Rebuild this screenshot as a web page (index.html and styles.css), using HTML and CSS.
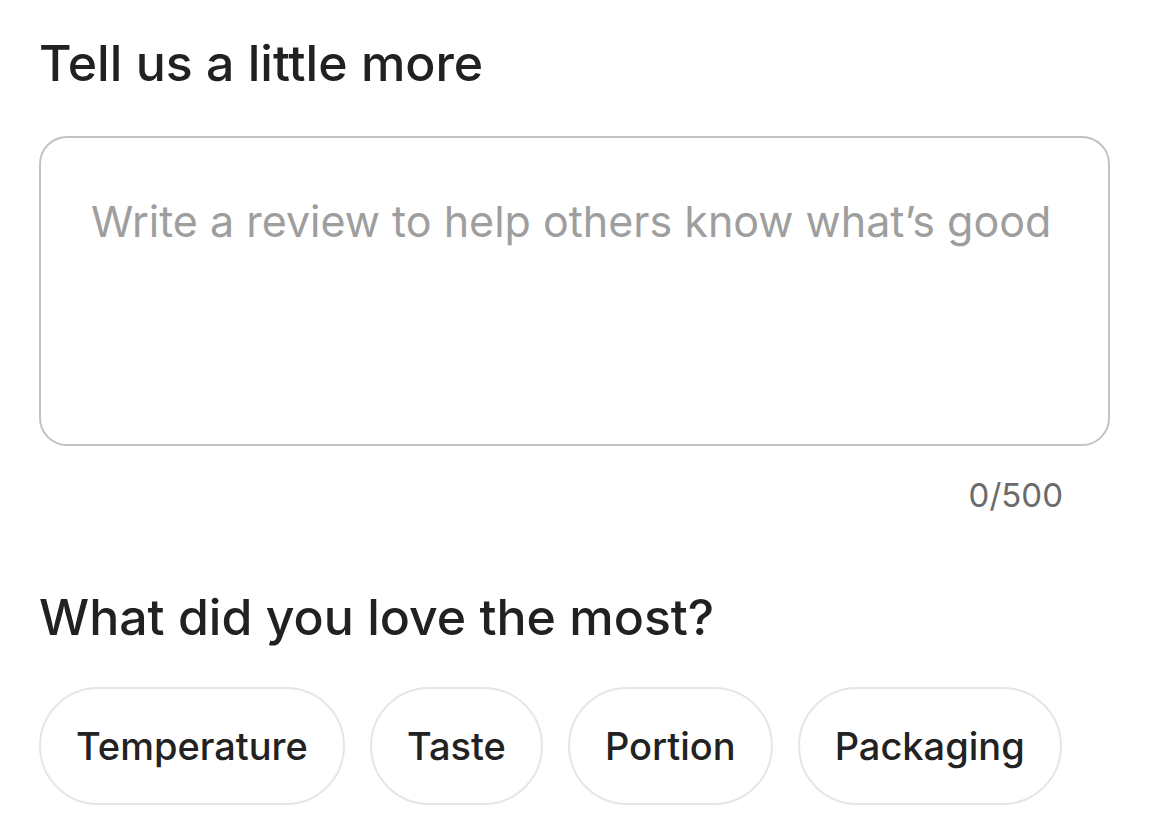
FILE: index.html
```html
<!DOCTYPE html>
<html>
<head>
<meta charset="utf-8">
<link rel="stylesheet" href="styles.css">
</head>
<body>
<main class="page">
  <h1 class="title">Tell us a little more</h1>
  <div class="review-box">
    <div class="placeholder">Write a review to help others know what’s good</div>
  </div>
  <div class="counter">0/500</div>
  <h2 class="title title-2">What did you love the most?</h2>
  <div class="chips">
    <button class="chip">Temperature</button>
    <button class="chip">Taste</button>
    <button class="chip">Portion</button>
    <button class="chip">Packaging</button>
  </div>
</main>
</body>
</html>
```

FILE: styles.css
```css
html, body {
  margin: 0;
  padding: 0;
  background: #ffffff;
}
.page {
  font-family: Inter, Roboto, "Liberation Sans", sans-serif;
  padding: 30px 40px 0 39px;
  width: 1071px;
}
.title {
  margin: 0;
  font-size: 50px;
  line-height: 66px;
  font-weight: 500;
  color: #212121;
  letter-spacing: 0;
}
.review-box {
  margin-top: 40px;
  height: 310px;
  border: 2px solid #c2c2c2;
  border-radius: 28px;
  padding: 53px 50px 0 50px;
  box-sizing: border-box;
}
.placeholder {
  font-size: 43px;
  line-height: 60px;
  color: #9e9e9e;
}
.counter {
  text-align: right;
  padding-right: 47px;
  margin-top: 29px;
  font-size: 33px;
  line-height: 40px;
  color: #6b6b6b;
}
.title-2 {
  margin-top: 69px;
}
.chips {
  display: flex;
  gap: 25px;
  margin-top: 37px;
}
.chip {
  font-family: inherit;
  font-size: 38px;
  font-weight: 500;
  color: #222222;
  background: #fff;
  border: 2px solid #e6e6e6;
  border-radius: 60px;
  height: 118px;
  padding: 0 35px;
}
```
